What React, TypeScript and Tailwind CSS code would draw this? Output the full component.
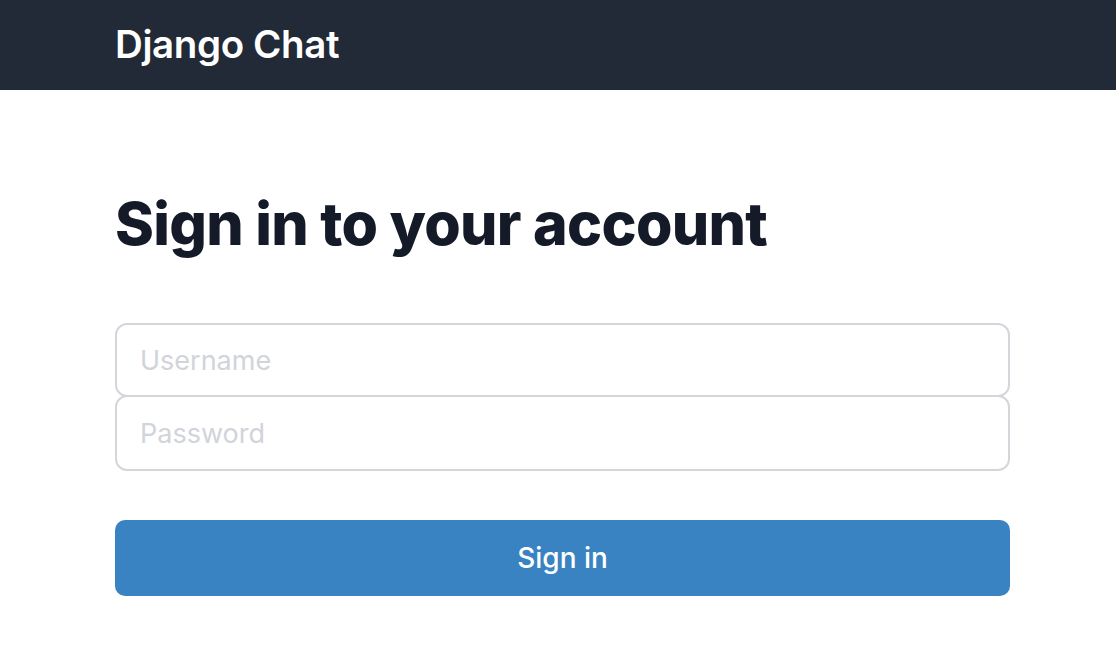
export default function App() {
    return (
        <div className="min-h-screen bg-white font-['Inter',sans-serif]">
            <nav className="h-[90px] bg-[#222937] flex items-center px-[115px]">
                <h1 className="text-[38.5px] font-semibold text-white tracking-[-0.01em]">Django Chat</h1>
            </nav>
            <main className="px-[115px] pt-[102px]">
                <div className="w-[895px]">
                    <h2 className="text-[59px] leading-[64px] font-extrabold text-[#151a28] tracking-[-0.012em]">Sign in to your account</h2>
                    <form className="mt-[67px]">
                        <div className="flex flex-col">
                            <input
                                type="text"
                                placeholder="Username"
                                className="h-[74px] w-full rounded-xl border-2 border-[#d4d6db] px-[23px] text-[27px] placeholder:text-[#d1d4da] outline-none"
                            />
                            <input
                                type="password"
                                placeholder="Password"
                                className="-mt-[2px] h-[76px] w-full rounded-xl border-2 border-[#d4d6db] px-[23px] text-[27px] placeholder:text-[#d1d4da] outline-none"
                            />
                        </div>
                        <button
                            type="submit"
                            className="mt-[49px] h-[76px] w-full rounded-[10px] bg-[#3a83c2] text-white text-[28px] font-medium"
                        >
                            Sign in
                        </button>
                    </form>
                </div>
            </main>
        </div>
    )
}
